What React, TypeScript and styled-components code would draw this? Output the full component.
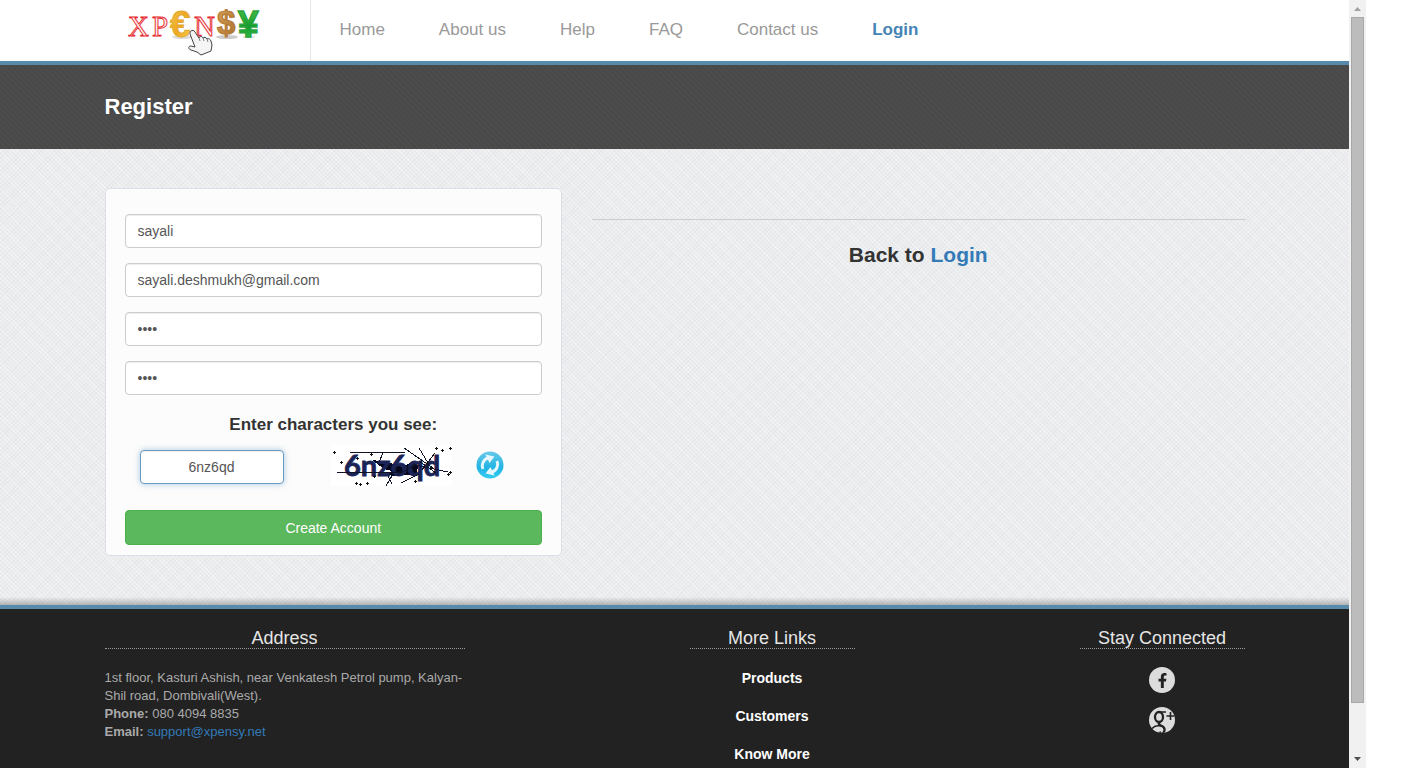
import React from "react";
import styled, { createGlobalStyle, css } from "styled-components";
import { FaFacebookF } from "react-icons/fa";

const GlobalStyle = createGlobalStyle`
  *, *::before, *::after { box-sizing: border-box; }
  body {
    margin: 0;
    background: #fff;
    color: #333;
    font: 14px/20px "Liberation Sans", Arial, sans-serif;
  }
  a { color: #337ab7; text-decoration: none; }
  h1, h2, h3, p, ul { margin: 0; padding: 0; }
`;

const Shell = styled.div`
  display: grid;
  grid-template-columns: minmax(0, 1fr) 17px;
  padding-right: 56px;
  min-height: 100vh;
`;

const Page = styled.div`
  display: flex;
  flex-direction: column;
`;

const Container = styled.div`
  width: 100%;
  max-width: 1170px;
  margin: 0 auto;
  padding: 0 15px;
`;

const Columns = styled(Container)`
  display: grid;
  grid-template-columns: repeat(12, minmax(0, 1fr));
  column-gap: 30px;
  align-items: start;
`;

const Column = styled.section<{ $start: number; $span: number }>`
  grid-column: ${(p) => p.$start} / span ${(p) => p.$span};
`;

const Header = styled.header`
  background: #fff;
  border-bottom: 4px solid #588aac;
`;

const HeaderRow = styled(Container)`
  display: flex;
  height: 61px;
`;

const Brand = styled.a`
  display: block;
  width: 206px;
  padding-left: 22px;
  border-right: 1px solid #e7e7e7;
  svg { display: block; }
`;

const Nav = styled.nav`
  display: flex;
  gap: 54px;
  padding: 20px 0 0 29px;
`;

const NavLink = styled.a<{ $active?: boolean }>`
  font-size: 17px;
  line-height: 20px;
  color: ${(p) => (p.$active ? "#4484b5" : "#999")};
  font-weight: ${(p) => (p.$active ? 700 : 400)};
`;

const TitleBand = styled.div`
  padding: 30px 0;
  background: repeating-linear-gradient(45deg, #4c4c4c 0 2px, #494949 2px 4px);
`;

const Title = styled.h1`
  font-size: 22px;
  line-height: 24px;
  color: #fff;
`;

const Main = styled.main`
  padding: 39px 0 49px;
  background-color: #ebecee;
  background-image:
    linear-gradient(to top, rgba(90, 90, 90, 0.4), rgba(90, 90, 90, 0) 8px),
    repeating-linear-gradient(45deg, rgba(255, 255, 255, 0.35) 0 1px, transparent 1px 3px),
    repeating-linear-gradient(-45deg, rgba(150, 155, 165, 0.07) 0 1px, transparent 1px 3px);
`;

const Card = styled.form`
  display: flex;
  flex-direction: column;
  gap: 15px;
  padding: 25px 19px 10px;
  border: 1px solid #dcdfe8;
  border-radius: 5px;
  background: #fcfcfc;
`;

const Field = styled.input<{ $highlight?: boolean }>`
  width: 100%;
  height: 34px;
  padding: 6px 12px;
  border: 1px solid #ccc;
  border-radius: 4px;
  background: #fff;
  box-shadow: inset 0 1px 1px rgba(0, 0, 0, 0.075);
  color: #555;
  font: 14px/20px "Liberation Sans", Arial, sans-serif;
  outline: none;
  ${(p) =>
    p.$highlight &&
    css`
      width: 144px;
      text-align: center;
      border-color: #6c9cc0;
      box-shadow: inset 0 1px 1px rgba(0, 0, 0, 0.075), 0 0 6px rgba(110, 165, 205, 0.6);
    `}
`;

const CaptchaLabel = styled.label`
  padding-top: 5px;
  text-align: center;
  font-size: 17px;
  line-height: 20px;
  font-weight: 700;
`;

const CaptchaRow = styled.div`
  display: flex;
  align-items: flex-start;
  margin: -5px 0 9px;
  padding-left: 15px;
  svg { display: block; }
`;

const CaptchaField = styled(Field)`
  margin-top: 5px;
`;

const CaptchaPicture = styled.div`
  margin: 0 24px 0 47px;
`;

const RefreshButton = styled.button`
  padding: 6px 0 0;
  border: 0;
  background: none;
`;

const SubmitButton = styled.button`
  height: 35px;
  border: 1px solid #4cae4c;
  border-radius: 4px;
  background: #5cb85c;
  color: #fff;
  font: 14px/20px "Liberation Sans", Arial, sans-serif;
`;

const BackPanel = styled.div`
  margin-top: 31px;
  padding-top: 23px;
  border-top: 1px solid #ccc;
  text-align: center;
`;

const BackTitle = styled.h2`
  font-size: 21px;
  line-height: 24px;
`;

const Footer = styled.footer`
  flex: 1;
  padding-top: 19px;
  border-top: 4px solid #588aac;
  background: #222;
  color: #aaa;
`;

const FooterTitle = styled.h3`
  margin-bottom: 20px;
  border-bottom: 1px dotted #999;
  text-align: center;
  font-size: 18px;
  line-height: 20px;
  font-weight: 400;
  color: #e6e6e6;
`;

const AddressText = styled.p`
  font-size: 13px;
  line-height: 18px;
`;

const LinkList = styled.ul<{ $gap: number }>`
  display: flex;
  flex-direction: column;
  align-items: center;
  gap: ${(p) => p.$gap}px;
  list-style: none;
`;

const FooterLink = styled.a`
  display: block;
  color: #fff;
  font-weight: 700;
  font-size: 14px;
  line-height: 18px;
`;

const SocialLink = styled.a`
  display: flex;
  align-items: center;
  justify-content: center;
  width: 26px;
  height: 26px;
  margin-top: -2px;
  border-radius: 50%;
  background: #dcdcdc;
  color: #222;
  overflow: hidden;
`;

const ScrollTrack = styled.div`
  display: flex;
  flex-direction: column;
  align-items: center;
  height: 100vh;
  padding: 7px 0;
  background: #f1f1f1;
  svg { display: block; flex: none; }
`;

const ScrollThumb = styled.div`
  flex: 0 0 91%;
  width: 13px;
  margin: 6px 0 auto;
  border: 1px solid #a8a8a8;
  background: #bcbcbc;
`;

function Logo() {
  return (
    <svg width="140" height="60" viewBox="0 0 140 60" role="img" aria-label="Xpensy">
      <defs>
        <linearGradient id="gold" x1="0" y1="0" x2="1" y2="1">
          <stop offset="0" stopColor="#f9c84d" />
          <stop offset="0.5" stopColor="#eda823" />
          <stop offset="1" stopColor="#f7d24a" />
        </linearGradient>
        <linearGradient id="bronze" x1="0" y1="0" x2="1" y2="1">
          <stop offset="0" stopColor="#d9a35c" />
          <stop offset="1" stopColor="#aa6f28" />
        </linearGradient>
        <linearGradient id="green" x1="0" y1="0" x2="0" y2="1">
          <stop offset="0" stopColor="#55c550" />
          <stop offset="0.55" stopColor="#159b2d" />
          <stop offset="1" stopColor="#3bd34f" />
        </linearGradient>
      </defs>
      <ellipse cx="55" cy="37" rx="10" ry="2" fill="#ddd" />
      <ellipse cx="100" cy="37" rx="11" ry="2" fill="#ccc" />
      <ellipse cx="122" cy="37" rx="6" ry="1" fill="#ddd" />
      <g fontFamily="Liberation Serif, serif" fontSize="29" fill="#fde8e8" stroke="#e5262b" strokeWidth="0.9">
        <text x="1" y="36">X</text>
        <text x="25" y="36">P</text>
        <text x="67" y="36">N</text>
      </g>
      <g fontFamily="Liberation Sans, sans-serif" fontWeight="700">
        <text x="43" y="37" fontSize="37" fill="url(#gold)" stroke="#e0a52c" strokeWidth="0.8">€</text>
        <text x="90" y="34" fontSize="33" fill="url(#bronze)" stroke="#b57b38" strokeWidth="1.2">$</text>
        <text x="111" y="37" fontSize="37" fill="url(#green)" stroke="#2ba63c" strokeWidth="1.5">¥</text>
      </g>
      <path
        d="M64 31c1-1 3-1 4 1l4 6c1-2 3-2 4 0 1-1 3-1 4 1 2-1 3 0 4 2l1 4-1 6-10 4-4-3-6-2c-3-1-3-4 0-4l4 1-5-13c0-1 0-2 1-3z"
        fill="#f5f5f5"
        stroke="#444"
        strokeWidth="1"
        strokeLinejoin="round"
      />
      <path d="M72 38l1 3M76 38l1 3M80 39l1 3" stroke="#666" strokeWidth="0.8" />
    </svg>
  );
}

const specks = [
  [2, 6], [9, 16], [25, 12], [39, 8], [104, 2], [110, 4], [24, 37], [35, 37],
  [42, 30], [83, 35], [116, 28], [118, 2], [28, 38], [118, 26],
];

function Captcha() {
  return (
    <svg width="121" height="41" viewBox="0 0 121 41" role="img" aria-label="Captcha" shapeRendering="crispEdges">
      <rect width="121" height="41" fill="#fff" />
      <path d="M41 15l16 2 14 5 10-5 6 3-1 9-12 1-10 1-8-1 5-4-8-2z" fill="#05081c" />
      <text
        x="13"
        y="31"
        fontFamily="Lato, sans-serif"
        fontSize="29"
        fontWeight="700"
        fill="#1b2456"
        stroke="#1b2456"
        strokeWidth="0.8"
      >
        6nz6qd
      </text>
      <path
        d="M19 7.500h55M52 8l-4 9M73 3l29 20M88 3l12 20M104 8L91 25M6 27.500h64M61 31l-6 10M57 31l4 8M70 38l18-9M84 20l33 7M66 30l20-11M88 16l17 12"
        stroke="#101325"
        fill="none"
      />
      {specks.map(([x, y]) => (
        <path key={x + "-" + y} d={`M${x} ${y + 1}h3v1h-3zM${x + 1} ${y}h1v3h-1z`} fill="#111" />
      ))}
    </svg>
  );
}

function RefreshIcon() {
  return (
    <svg width="28" height="28" viewBox="0 0 28 28" aria-hidden="true">
      <defs>
        <linearGradient id="sky" x1="0" y1="0" x2="0" y2="1">
          <stop offset="0" stopColor="#68c9e9" />
          <stop offset="0.6" stopColor="#21b4e2" />
          <stop offset="1" stopColor="#35cdf4" />
        </linearGradient>
      </defs>
      <circle cx="14" cy="14" r="13.500" fill="url(#sky)" />
      <g fill="none" stroke="#e6f7fd" strokeWidth="3">
        <path d="M7 18a8 8 0 0 1 5-11" />
        <path d="M21 10a8 8 0 0 1-5 11" />
      </g>
      <path d="M9.500 3.500l9 2-5 6.500zM18.500 24.500l-9-2 5-6.500z" fill="#e6f7fd" />
    </svg>
  );
}

function GooglePlusIcon() {
  return (
    <svg width="26" height="26" viewBox="0 0 26 26" aria-hidden="true">
      <g fill="none" stroke="#222">
        <ellipse cx="10" cy="10" rx="4" ry="5" strokeWidth="2.300" />
        <path d="M10 5h7" strokeWidth="1.400" />
        <path d="M11 15c-3 2 0 3 2 4 4 2 3 7-1 8" strokeWidth="2.300" />
        <path d="M12 19c-5-1-9 1-9 4s5 4 9 2" strokeWidth="1.400" />
        <path d="M21.500 5v8M17.500 9h8" strokeWidth="1.600" />
      </g>
    </svg>
  );
}

function Scrollbar() {
  return (
    <ScrollTrack aria-hidden="true">
      <svg width="7" height="4" viewBox="0 0 7 4"><path d="M0 4L3.500 0 7 4z" fill="#a0a0a0" /></svg>
      <ScrollThumb />
      <svg width="7" height="4" viewBox="0 0 7 4"><path d="M0 0l3.500 4L7 0z" fill="#505050" /></svg>
    </ScrollTrack>
  );
}

const navItems = ["Home", "About us", "Help", "FAQ", "Contact us", "Login"];
const moreLinks = ["Products", "Customers", "Know More"];

export default function App() {
  return (
    <Shell>
      <GlobalStyle />
      <Page>
        <Header>
          <HeaderRow>
            <Brand href="#"><Logo /></Brand>
            <Nav>
              {navItems.map((item) => (
                <NavLink key={item} href="#" $active={item === "Login"}>{item}</NavLink>
              ))}
            </Nav>
          </HeaderRow>
        </Header>
        <TitleBand>
          <Container><Title>Register</Title></Container>
        </TitleBand>
        <Main>
          <Columns>
            <Column $start={1} $span={5}>
              <Card onSubmit={(e) => e.preventDefault()}>
                <Field aria-label="Name" defaultValue="sayali" />
                <Field type="email" aria-label="Email" defaultValue="sayali.deshmukh@gmail.com" />
                <Field type="password" aria-label="Password" defaultValue="abcd" />
                <Field type="password" aria-label="Confirm password" defaultValue="abcd" />
                <CaptchaLabel htmlFor="captcha">Enter characters you see:</CaptchaLabel>
                <CaptchaRow>
                  <CaptchaField id="captcha" $highlight defaultValue="6nz6qd" />
                  <CaptchaPicture><Captcha /></CaptchaPicture>
                  <RefreshButton type="button" aria-label="New characters"><RefreshIcon /></RefreshButton>
                </CaptchaRow>
                <SubmitButton type="submit">Create Account</SubmitButton>
              </Card>
            </Column>
            <Column $start={6} $span={7}>
              <BackPanel>
                <BackTitle>Back to <a href="#">Login</a></BackTitle>
              </BackPanel>
            </Column>
          </Columns>
        </Main>
        <Footer>
          <Columns>
            <Column $start={1} $span={4}>
              <FooterTitle>Address</FooterTitle>
              <AddressText>
                1st floor, Kasturi Ashish, near Venkatesh Petrol pump, Kalyan-Shil road, Dombivali(West).
              </AddressText>
              <AddressText><b>Phone:</b> 080 4094 8835</AddressText>
              <AddressText><b>Email:</b> <a href="mailto:support@xpensy.net">support@xpensy.net</a></AddressText>
            </Column>
            <Column $start={7} $span={2}>
              <FooterTitle>More Links</FooterTitle>
              <LinkList $gap={20}>
                {moreLinks.map((item) => (
                  <li key={item}><FooterLink href="#">{item}</FooterLink></li>
                ))}
              </LinkList>
            </Column>
            <Column $start={11} $span={2}>
              <FooterTitle>Stay Connected</FooterTitle>
              <LinkList $gap={16}>
                <li><SocialLink href="#" aria-label="Facebook"><FaFacebookF size={15} /></SocialLink></li>
                <li><SocialLink href="#" aria-label="Google Plus"><GooglePlusIcon /></SocialLink></li>
              </LinkList>
            </Column>
          </Columns>
        </Footer>
      </Page>
      <Scrollbar />
    </Shell>
  );
}
